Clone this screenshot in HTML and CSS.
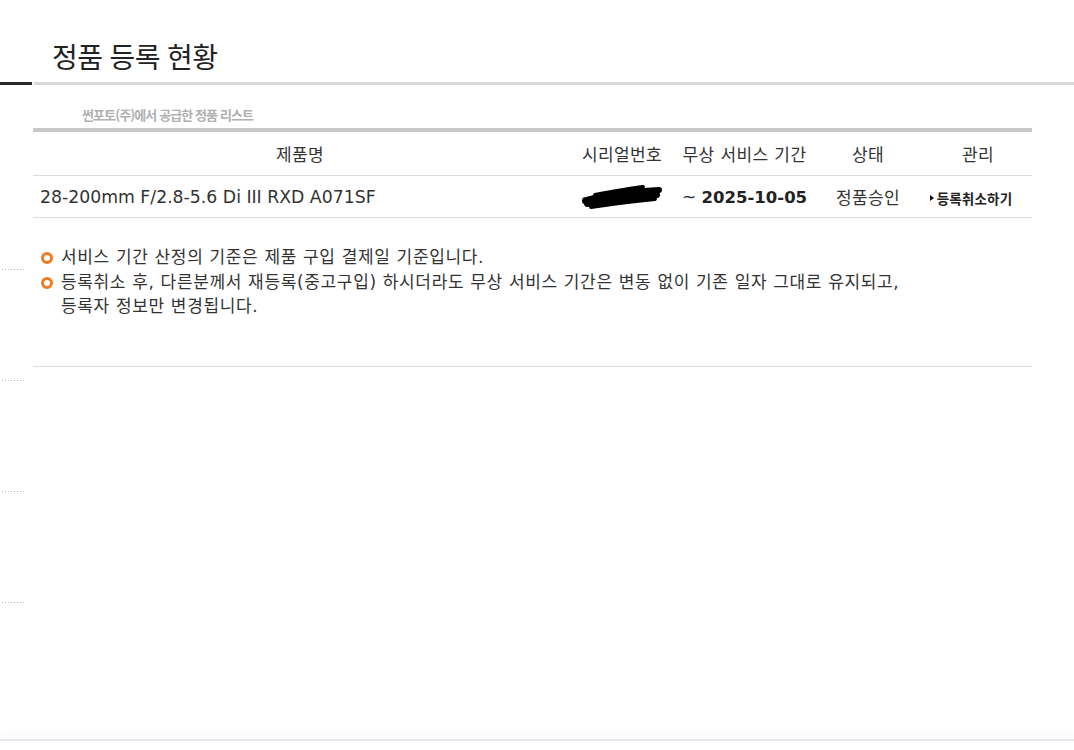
FILE: index.html
```html
<!DOCTYPE html>
<html lang="ko">
<head>
<meta charset="utf-8">
<title>정품 등록 현황</title>
<link rel="stylesheet" href="styles.css">
</head>
<body>
<div class="rail">
  <span class="dots"></span>
  <span class="dots"></span>
  <span class="dots"></span>
  <span class="dots"></span>
</div>
<div class="page">
  <h1 class="title">정품 등록 현황</h1>
  <div class="title-bar"><span class="bar-dark"></span><span class="bar-light"></span></div>
  <div class="content">
    <p class="subtitle">썬포토(주)에서 공급한 정품 리스트</p>
    <table class="list">
      <colgroup>
        <col class="c-name"><col class="c-serial"><col class="c-period"><col class="c-state"><col class="c-manage">
      </colgroup>
      <thead>
        <tr>
          <th>제품명</th>
          <th>시리얼번호</th>
          <th>무상 서비스 기간</th>
          <th>상태</th>
          <th>관리</th>
        </tr>
      </thead>
      <tbody>
        <tr>
          <td class="name">28-200mm F/2.8-5.6 Di III RXD A071SF</td>
          <td class="serial">
            <svg class="scribble" width="82" height="26" viewBox="0 0 82 26">
              <g stroke="#000" stroke-linecap="round" fill="none">
                <path d="M4 17 C20 12 40 8 78 6" stroke-width="6"/>
                <path d="M6 20 C26 16 50 13 76 11" stroke-width="6"/>
                <path d="M10 23 C30 20 52 17 74 15" stroke-width="4"/>
                <path d="M14 11 C30 8 46 5 62 3" stroke-width="4"/>
                <path d="M3 15 L20 11" stroke-width="3"/>
              </g>
            </svg>
          </td>
          <td class="period">~ <b>2025-10-05</b></td>
          <td class="state">정품승인</td>
          <td class="manage"><a class="cancel" href="#"><span class="tri"></span>등록취소하기</a></td>
        </tr>
      </tbody>
    </table>
    <ul class="notes">
      <li>서비스 기간 산정의 기준은 제품 구입 결제일 기준입니다.</li>
      <li>등록취소 후, 다른분께서 재등록(중고구입) 하시더라도 무상 서비스 기간은 변동 없이 기존 일자 그대로 유지되고,<br>등록자 정보만 변경됩니다.</li>
    </ul>
    <div class="sep"></div>
  </div>
</div>
<div class="footer-line"></div>
</body>
</html>
```

FILE: styles.css
```css
html, body {
  margin: 0;
  padding: 0;
  background: #fff;
}
body {
  font-family: "DejaVu Sans", "Noto Sans CJK KR", sans-serif;
  color: #333;
  width: 1074px;
  height: 750px;
  position: relative;
  overflow: hidden;
}
.rail {
  position: absolute;
  left: 2px;
  top: 269px;
  display: flex;
  flex-direction: column;
  gap: 110px;
}
.dots {
  display: block;
  width: 23px;
  height: 1px;
  background-image: repeating-linear-gradient(to right, #b8b8b8 0 1px, transparent 1px 3px);
}
.page {
  padding-top: 36px;
}
.title {
  margin: 0 0 0 52px;
  font-family: "Noto Sans CJK KR", sans-serif;
  font-weight: 400;
  font-size: 28px;
  line-height: 40px;
  color: #222;
  letter-spacing: -0.6px;
}
.title-bar {
  display: flex;
  gap: 2px;
  margin-top: 6px;
  height: 3px;
}
.bar-dark {
  width: 32px;
  background: #2b2b2b;
}
.bar-light {
  flex: 1;
  background: #d9d9d9;
}
.content {
  margin: 0 42px 0 33px;
}
.subtitle {
  margin: 22px 0 0 49px;
  font-family: "Noto Sans CJK KR", sans-serif;
  font-size: 13px;
  font-weight: 700;
  line-height: 16px;
  color: #b0b0b0;
  letter-spacing: -0.9px;
  height: 21px;
}
.list {
  width: 999px;
  border-collapse: collapse;
  border-top: 4px solid #c8c8c8;
  table-layout: fixed;
}
.c-name { width: 534px; }
.c-serial { width: 110px; }
.c-period { width: 135px; }
.c-state { width: 112px; }
.c-manage { width: 108px; }
.list th {
  font-weight: 400;
  font-size: 17px;
  letter-spacing: 0.4px;
  color: #333;
  height: 43px;
  padding: 0;
  border-bottom: 1px solid #dcdcdc;
  text-align: center;
}
.list td {
  height: 41px;
  padding: 0;
  font-size: 17px;
  color: #333;
  border-bottom: 1px solid #dcdcdc;
  text-align: center;
}
.list td.name {
  text-align: left;
  padding-left: 7px;
  font-size: 17.3px;
}
.scribble {
  display: block;
  margin: 1px 0 0 14px;
}
.period {
  font-size: 16px;
}
.period b {
  font-weight: 700;
  font-size: 16.5px;
  color: #222;
}
.state {
  padding-left: 2px;
  letter-spacing: 0.4px;
}
.cancel {
  display: inline-flex;
  align-items: center;
  gap: 3px;
  text-decoration: none;
  font-family: "Noto Sans CJK KR", sans-serif;
  font-weight: 700;
  font-size: 13.5px;
  color: #222;
  letter-spacing: 0.2px;
  margin-top: -3px;
  margin-left: -14px;
}
.tri {
  width: 0;
  height: 0;
  border-top: 3px solid transparent;
  border-bottom: 3px solid transparent;
  border-left: 4px solid #111;
}
.notes {
  list-style: none;
  margin: 27px 0 0 8px;
  padding: 0;
  font-size: 17px;
  letter-spacing: 0.65px;
  line-height: 24.5px;
  color: #333;
}
.notes li {
  position: relative;
  padding-left: 20px;
}
.notes li::before {
  content: "";
  position: absolute;
  left: 0;
  top: 7px;
  width: 6px;
  height: 6px;
  border: 3px solid #f07a22;
  border-radius: 50%;
}
.sep {
  margin-top: 47px;
  height: 1px;
  background: #dcdcdc;
}
.footer-line {
  position: absolute;
  left: 0;
  right: 0;
  top: 739px;
  height: 2px;
  background: #e8e8ee;
  box-shadow: 0 -4px 6px rgba(230, 230, 240, 0.6);
}
```
